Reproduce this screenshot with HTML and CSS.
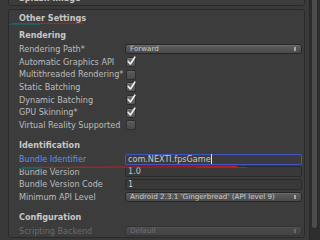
FILE: index.html
```html
<!DOCTYPE html>
<html lang="en">
<head>
    <meta charset="UTF-8">
    <title>Player Settings</title>
    <link rel="stylesheet" href="styles.css">
</head>
<body>
    <div class="inspector">
        <div class="panel">
            <div class="group splash">
                <div class="group-title">Splash Image</div>
            </div>

            <div class="group">
                <div class="group-title first">Other Settings</div>

                <div class="section">
                    <div class="section-title">Rendering</div>
                    <div class="rows">
                        <div class="row">
                            <span class="label">Rendering Path*</span>
                            <div class="popup"><span>Forward</span><span class="popup-arrow"></span></div>
                        </div>
                        <div class="row">
                            <span class="label">Automatic Graphics API</span>
                            <span class="toggle checked">
                                <svg class="tick" width="11" height="11" viewBox="0 0 11 11"><path d="M2.2 5.4 L4.4 8 L8.8 1.2" /></svg>
                            </span>
                        </div>
                        <div class="row">
                            <span class="label">Multithreaded Rendering*</span>
                            <span class="toggle"></span>
                        </div>
                        <div class="row">
                            <span class="label">Static Batching</span>
                            <span class="toggle checked">
                                <svg class="tick" width="11" height="11" viewBox="0 0 11 11"><path d="M2.2 5.4 L4.4 8 L8.8 1.2" /></svg>
                            </span>
                        </div>
                        <div class="row">
                            <span class="label">Dynamic Batching</span>
                            <span class="toggle checked">
                                <svg class="tick" width="11" height="11" viewBox="0 0 11 11"><path d="M2.2 5.4 L4.4 8 L8.8 1.2" /></svg>
                            </span>
                        </div>
                        <div class="row">
                            <span class="label">GPU Skinning*</span>
                            <span class="toggle checked">
                                <svg class="tick" width="11" height="11" viewBox="0 0 11 11"><path d="M2.2 5.4 L4.4 8 L8.8 1.2" /></svg>
                            </span>
                        </div>
                        <div class="row">
                            <span class="label">Virtual Reality Supported</span>
                            <span class="toggle"></span>
                        </div>
                    </div>
                </div>

                <div class="section">
                    <div class="section-title">Identification</div>
                    <div class="rows">
                        <div class="row">
                            <span class="label focused">Bundle Identifier</span>
                            <div class="field focused"><span class="caret">com.NEXTI.fpsGame</span></div>
                        </div>
                        <div class="row">
                            <span class="label">Bundle Version</span>
                            <div class="field">1.0</div>
                        </div>
                        <div class="row">
                            <span class="label">Bundle Version Code</span>
                            <div class="field">1</div>
                        </div>
                        <div class="row">
                            <span class="label">Minimum API Level</span>
                            <div class="popup"><span>Android 2.3.1 'Gingerbread' (API level 9)</span><span class="popup-arrow"></span></div>
                        </div>
                    </div>
                </div>

                <div class="section">
                    <div class="section-title">Configuration</div>
                    <div class="rows">
                        <div class="row disabled">
                            <span class="label">Scripting Backend</span>
                            <div class="popup"><span>Default</span><span class="popup-arrow"></span></div>
                        </div>
                    </div>
                </div>
            </div>
        </div>

        <div class="scrollbar">
            <div class="track"><div class="thumb"></div></div>
        </div>

        <!-- hand drawn marks over the screenshot -->
        <svg class="marks" width="320" height="240" viewBox="0 0 320 240">
            <path class="mark-shadow" d="M9 24.5 L40 24.5" />
            <path class="mark-red" d="M12 23.5 L84 23.2" />
            <path class="mark-shadow" d="M20 168.5 L42 168.5 M196 167.5 L247 167.5" />
            <path class="mark-red" d="M22 167.5 L237 166.5" />
        </svg>
    </div>
</body>
</html>
```

FILE: styles.css
```css
body {
    margin: 0;
    padding: 0;
    background-color: #393939;
    font-family: "DejaVu Sans", sans-serif;
    font-size: 8.1px;
    color: #bdbdbd;
}

.inspector {
    position: relative;
    display: flex;
    height: 240px;
    overflow: hidden;
}

.panel {
    flex: 1;
}

.group {
    margin-left: 8px;
    border: 1px solid #2a2a2a;
    border-radius: 3px;
    background-color: #3c3c3c;
}

.splash {
    margin-top: -10px;
    margin-bottom: 3px;
}

.group-title {
    height: 14px;
    line-height: 14px;
    padding-left: 10px;
    font-weight: bold;
    color: #c8c8c8;
    white-space: nowrap;
}

.group-title.first {
    padding-top: 1px;
}

.section + .section {
    margin-top: 6px;
}

.section-title {
    margin-top: 3px;
    height: 14px;
    line-height: 14px;
    padding-left: 10px;
    font-weight: bold;
    color: #c8c8c8;
}

.rows {
    margin-top: 1px;
}

.row {
    display: flex;
    align-items: center;
    height: 12.7px;
    padding: 0 2px 0 10px;
}

.label {
    flex: none;
    width: 106px;
    line-height: 12.7px;
    white-space: nowrap;
}

.label.focused {
    color: #5d8ff2;
}

.popup {
    flex: 1;
    display: flex;
    justify-content: space-between;
    align-items: center;
    box-sizing: border-box;
    height: 10px;
    padding: 0 4px;
    border: 1px solid #262626;
    border-radius: 3px;
    background: linear-gradient(#5e5e5e, #4a4a4a);
    box-shadow: inset 0 1px 0 #6a6a6a;
    font-size: 7.2px;
    line-height: 8px;
    color: #cacaca;
    white-space: nowrap;
}

.popup-arrow {
    width: 2px;
    height: 4px;
    margin-right: 1px;
    background-color: #a8a8a8;
}

.disabled .label {
    color: #6b6b6b;
}

.disabled .popup {
    border-color: #333;
    background: linear-gradient(#4a4a4a, #434343);
    box-shadow: inset 0 1px 0 #525252;
    color: #707070;
}

.disabled .popup-arrow {
    background-color: #6a6a6a;
}

.toggle {
    position: relative;
    box-sizing: border-box;
    width: 10px;
    height: 10px;
    margin-left: 1px;
    border: 1px solid #2e2e2e;
    border-radius: 2px;
    background: linear-gradient(#5a5a5a, #4a4a4a);
    box-shadow: inset 0 1px 0 #646464;
}

.toggle.checked {
    background: linear-gradient(#6a6a6a, #555);
    box-shadow: inset 0 1px 0 #767676;
}

.tick {
    position: absolute;
    left: -1px;
    top: -2px;
    overflow: visible;
}

.tick path {
    fill: none;
    stroke: #f0f0f0;
    stroke-width: 1.6;
    stroke-linecap: round;
    stroke-linejoin: round;
}

.field {
    flex: 1;
    box-sizing: border-box;
    height: 11px;
    padding-left: 2px;
    border: 1px solid #2a2a2a;
    border-radius: 2px;
    background-color: #393939;
    line-height: 9px;
    color: #cacaca;
    white-space: nowrap;
}

.field.focused {
    border-color: #3d57c4;
    background-color: #3b3b3b;
}

.caret {
    border-right: 1px solid #e0e0e0;
}

.scrollbar {
    flex: none;
    display: flex;
    justify-content: flex-end;
    width: 15px;
    background-color: #3a3a3a;
}

.track {
    width: 11px;
    height: 240px;
    background-color: #2e2e2e;
    border-left: 1px solid #262626;
    box-sizing: border-box;
}

.thumb {
    box-sizing: border-box;
    width: 7px;
    height: 229px;
    margin-left: 1px;
    border: 1px solid #2a2a2a;
    border-top: none;
    border-radius: 0 0 3px 3px;
    background-color: #4c4c4c;
}

.marks {
    position: absolute;
    left: 0;
    top: 0;
    pointer-events: none;
}

.mark-red {
    fill: none;
    stroke: #c81e1e;
    stroke-width: 1;
}

.mark-shadow {
    fill: none;
    stroke: #1f5d60;
    stroke-width: 1;
}
```
